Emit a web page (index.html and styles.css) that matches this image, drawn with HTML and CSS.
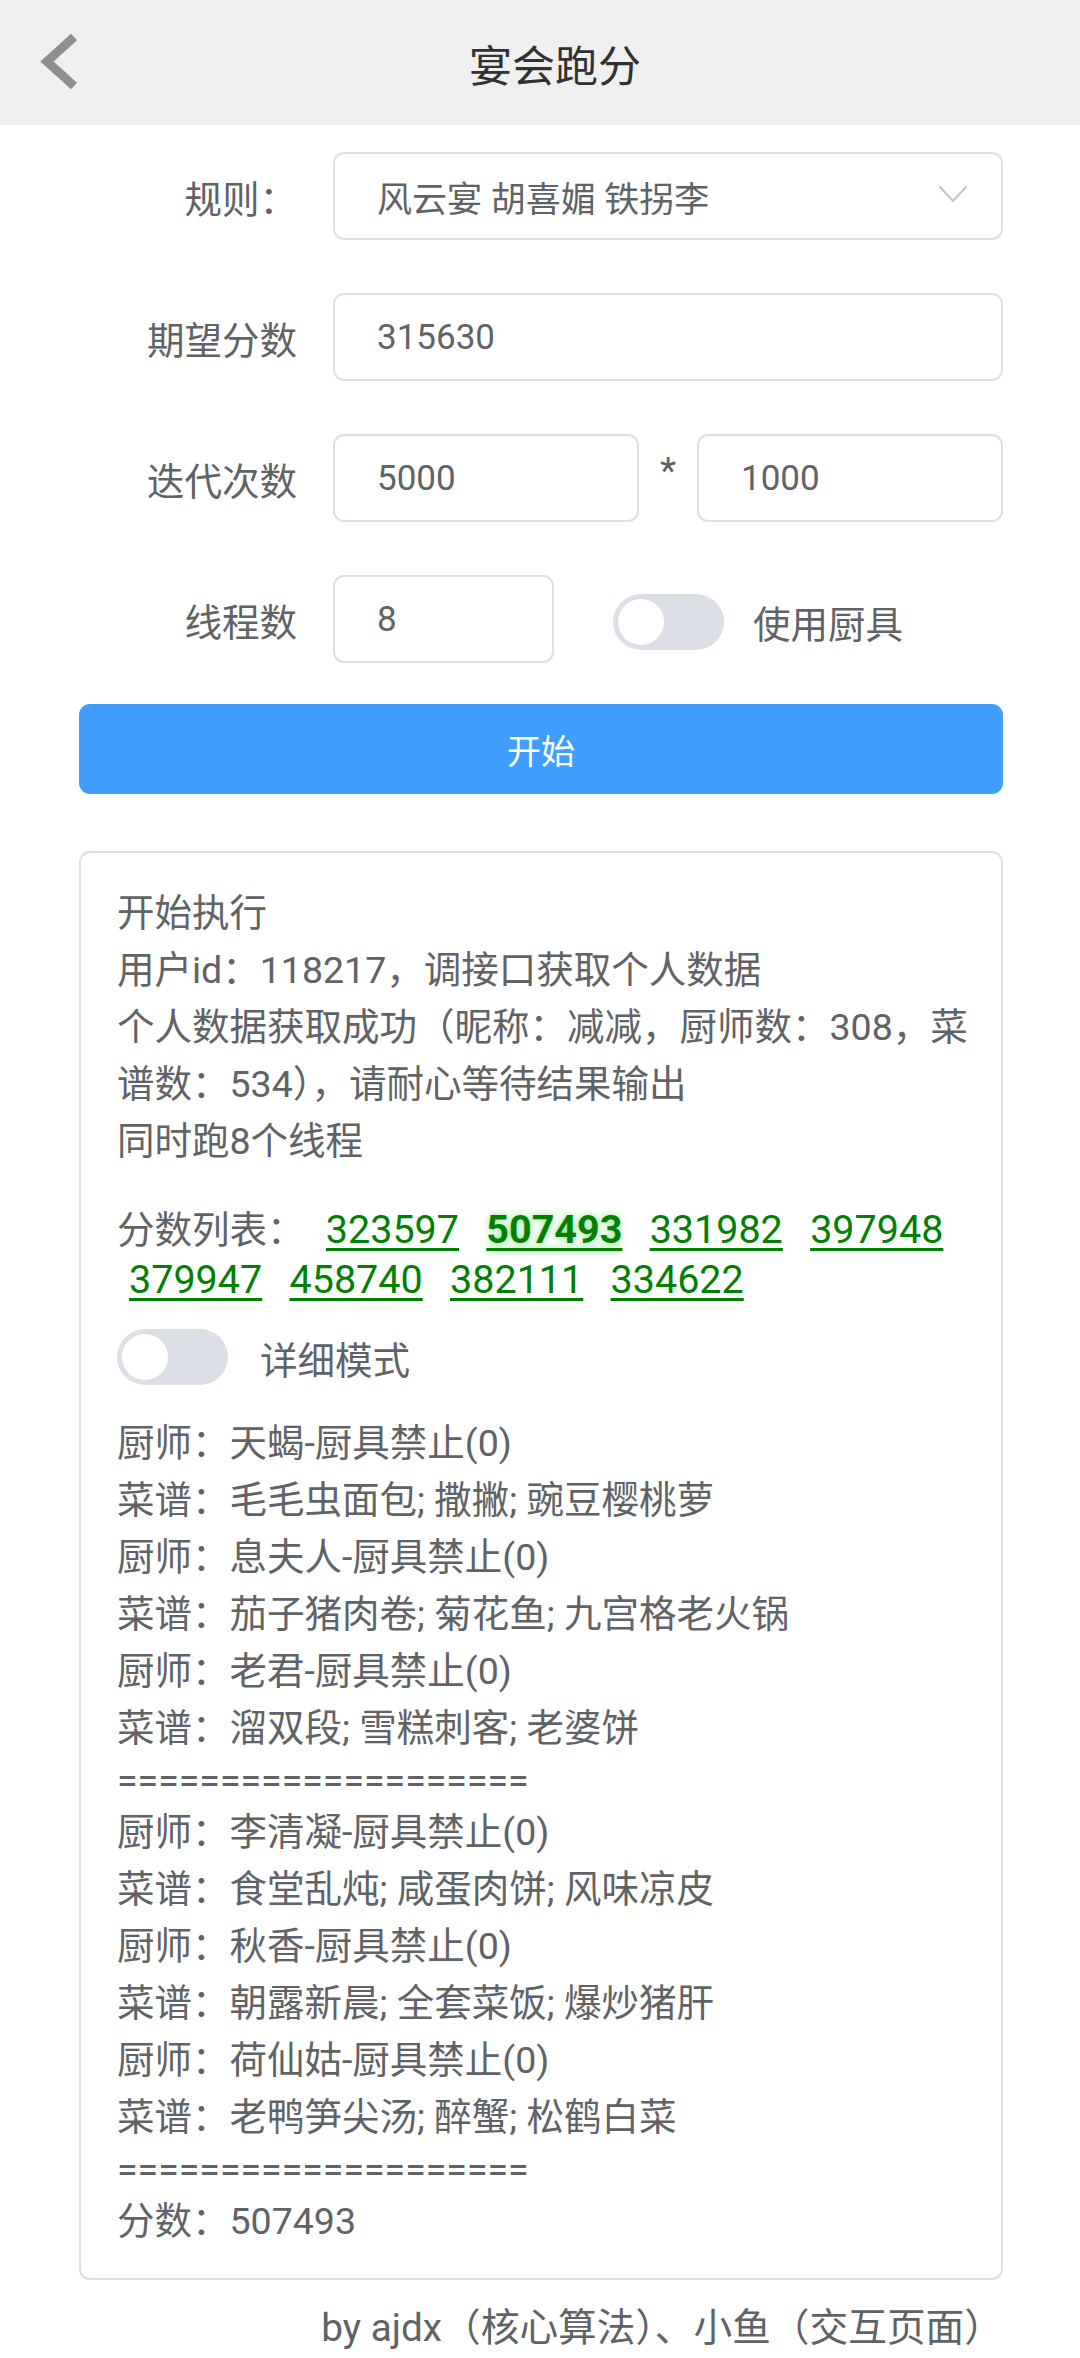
FILE: index.html
```html
<!DOCTYPE html>
<html lang="zh-CN">
<head>
<meta charset="utf-8">
<title>宴会跑分</title>
<link rel="stylesheet" href="styles.css">
</head>
<body>
<header class="header">
  <div class="back">
    <svg width="120" height="125" viewBox="0 0 120 125"><polyline points="74,37 47,61.5 74,86" fill="none" stroke="#8e8e8e" stroke-width="9"/></svg>
  </div>
  <div class="title">宴会跑分</div>
  <div class="spacer"></div>
</header>

<main class="page">
  <div class="row">
    <div class="label">规则：</div>
    <div class="field select">
      <span>风云宴 胡喜媚 铁拐李</span>
      <svg class="arrow" width="30" height="18" viewBox="0 0 30 18"><polyline points="1.5,1.5 15,16 28.5,1.5" fill="none" stroke="#c0c4cc" stroke-width="2.2"/></svg>
    </div>
  </div>
  <div class="row">
    <div class="label">期望分数</div>
    <div class="field">315630</div>
  </div>
  <div class="row">
    <div class="label">迭代次数</div>
    <div class="field">5000</div>
    <div class="star">*</div>
    <div class="field">1000</div>
  </div>
  <div class="row last">
    <div class="label">线程数</div>
    <div class="field small">8</div>
    <div class="switch"><div class="knob"></div></div>
    <div class="switch-text">使用厨具</div>
  </div>
  <div class="btn">开始</div>

  <section class="log">
    <div class="l">开始执行</div>
    <div class="l">用户id：118217，调接口获取个人数据</div>
    <div class="l">个人数据获取成功（昵称：减减，厨师数：308，菜<br>谱数：534），请耐心等待结果输出</div>
    <div class="l">同时跑8个线程</div>
    <div class="scores">分数列表： <a class="score">323597</a> <a class="score best">507493</a> <a class="score">331982</a> <a class="score">397948</a> <a class="score">379947</a> <a class="score">458740</a> <a class="score">382111</a> <a class="score">334622</a></div>
    <div class="detail">
      <div class="switch"><div class="knob"></div></div>
      <div class="switch-text">详细模式</div>
    </div>
    <div class="result">
      <div class="l">厨师：天蝎-厨具禁止(0)</div>
      <div class="l">菜谱：毛毛虫面包; 撒撇; 豌豆樱桃萝</div>
      <div class="l">厨师：息夫人-厨具禁止(0)</div>
      <div class="l">菜谱：茄子猪肉卷; 菊花鱼; 九宫格老火锅</div>
      <div class="l">厨师：老君-厨具禁止(0)</div>
      <div class="l">菜谱：溜双段; 雪糕刺客; 老婆饼</div>
      <div class="sep">====================</div>
      <div class="l">厨师：李清凝-厨具禁止(0)</div>
      <div class="l">菜谱：食堂乱炖; 咸蛋肉饼; 风味凉皮</div>
      <div class="l">厨师：秋香-厨具禁止(0)</div>
      <div class="l">菜谱：朝露新晨; 全套菜饭; 爆炒猪肝</div>
      <div class="l">厨师：荷仙姑-厨具禁止(0)</div>
      <div class="l">菜谱：老鸭笋尖汤; 醉蟹; 松鹤白菜</div>
      <div class="sep">====================</div>
      <div class="l">分数：507493</div>
    </div>
  </section>

  <footer class="footer">by ajdx（核心算法）、小鱼（交互页面）</footer>
</main>
</body>
</html>
```

FILE: styles.css
```css
* { box-sizing: border-box; }

body {
  margin: 0;
  width: 1080px;
  background: #ffffff;
  color: #606266;
  font-family: Roboto, "Noto Sans CJK SC", sans-serif;
  font-size: 37.5px;
}

.header {
  height: 125px;
  background: #efefef;
  display: flex;
  align-items: center;
}

.back {
  width: 120px;
  height: 125px;
  flex: none;
}

.back svg { display: block; }

.title {
  flex: 1;
  text-align: center;
  font-size: 43px;
  color: #303133;
}

.spacer {
  width: 90px;
  flex: none;
}

.page {
  padding: 27px 77px 0 79px;
}

.row {
  display: flex;
  align-items: center;
  height: 88px;
  margin-bottom: 53px;
}

.row.last { margin-bottom: 41px; }

.label {
  width: 254px;
  flex: none;
  padding-right: 36px;
  text-align: right;
  font-size: 37.5px;
  color: #606266;
}

.field {
  flex: 1;
  height: 88px;
  border: 2px solid #dcdfe6;
  border-radius: 11px;
  display: flex;
  align-items: center;
  padding-left: 42px;
  font-size: 35px;
  color: #606266;
}

.field.small {
  flex: none;
  width: 221px;
}

.select {
  justify-content: space-between;
  padding-right: 33px;
}

.arrow { display: block; margin-top: -4px; }

.star {
  width: 58px;
  flex: none;
  text-align: center;
  font-size: 37.5px;
  color: #606266;
  align-self: flex-start;
  padding-top: 14px;
}

.switch {
  width: 111px;
  height: 56px;
  flex: none;
  border-radius: 28px;
  background: #dcdfe6;
  position: relative;
}

.knob {
  position: absolute;
  left: 5px;
  top: 5px;
  width: 46px;
  height: 46px;
  border-radius: 50%;
  background: #ffffff;
}

.row .switch { margin-left: 59px; margin-top: 5px; }

.switch-text {
  margin-left: 29px;
  font-size: 37.5px;
  color: #606266;
}

.row .switch-text { margin-top: 4px; }

.btn {
  height: 90px;
  border-radius: 11px;
  background: #409eff;
  color: #ffffff;
  font-size: 34px;
  display: flex;
  align-items: center;
  justify-content: center;
}

.log {
  margin-top: 57px;
  border: 2px solid #dcdfe6;
  border-radius: 11px;
  padding: 32px 36px 28px 36px;
}

.l {
  line-height: 57px;
  white-space: nowrap;
}

.scores {
  margin-top: 35px;
  line-height: 50px;
}

.score {
  display: inline-block;
  margin: 0 6px 0 12px;
  color: #008000;
  font-size: 39.5px;
  text-decoration: underline;
  text-decoration-thickness: 3px;
  text-underline-offset: 5px;
}

.score.best {
  font-weight: bold;
  text-shadow: 0 0 7px rgba(40, 200, 40, 0.55);
}

.detail {
  margin-top: 24px;
  display: flex;
  align-items: center;
  height: 56px;
}

.detail .switch-text { margin-left: 32px; }

.result {
  margin-top: 30px;
}

.sep {
  line-height: 47px;
  white-space: nowrap;
}

.footer {
  margin-top: 19px;
  line-height: 57px;
  text-align: right;
  font-size: 38.7px;
  color: #606266;
}
```
